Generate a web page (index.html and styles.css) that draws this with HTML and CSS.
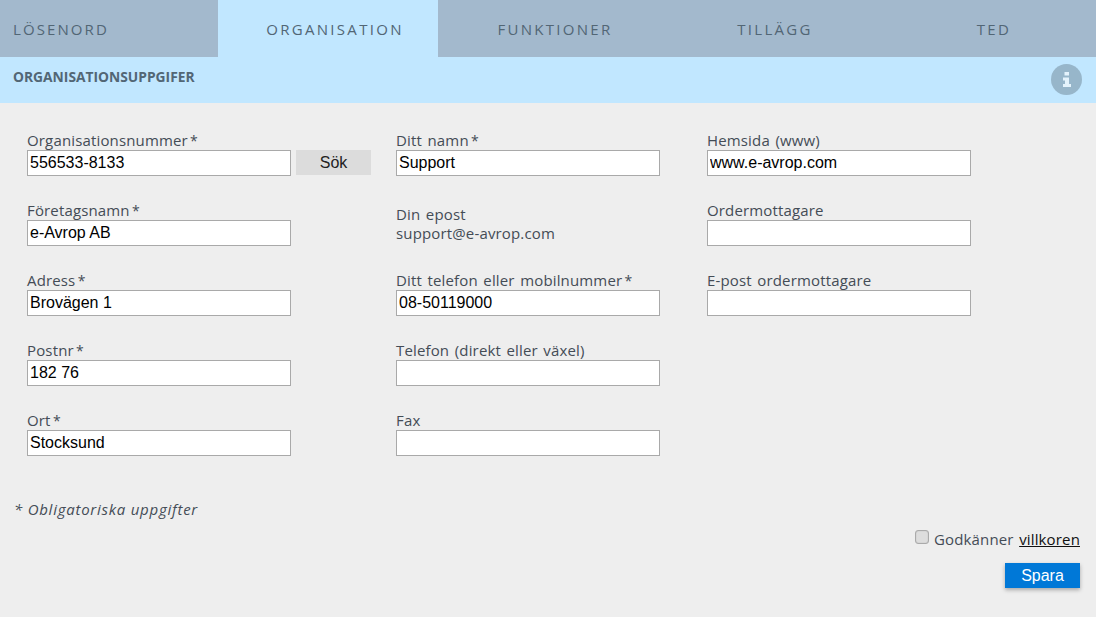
FILE: index.html
```html
<!DOCTYPE html>
<html lang="sv">
<head>
<meta charset="utf-8">
<title>Organisation</title>
<link rel="stylesheet" href="styles.css">
</head>
<body>
<div class="page">
  <nav class="tabs">
    <a class="tab tab-first">LÖSENORD</a>
    <a class="tab active">ORGANISATION</a>
    <a class="tab">FUNKTIONER</a>
    <a class="tab">TILLÄGG</a>
    <a class="tab">TED</a>
  </nav>
  <header class="section-head">
    <h2>ORGANISATIONSUPPGIFER</h2>
    <span class="info"><svg width="12" height="15" viewBox="0 0 12 15"><path fill="#e4f3fc" d="M3.500 0h4.500v3.500H3.500zM2 5.500h6v6.500h2v3H2v-3h2V8.500H2z"/></svg></span>
  </header>
  <main class="content">
    <div class="grid">
      <div class="col col-1">
        <div class="field"><label>Organisationsnummer<i class="req"> *</i></label>
          <div class="row"><input value="556533-8133"><button class="search">Sök</button></div></div>
        <div class="field"><label>Företagsnamn<i class="req"> *</i></label><input value="e-Avrop AB"></div>
        <div class="field"><label>Adress<i class="req"> *</i></label><input value="Brovägen 1"></div>
        <div class="field"><label>Postnr<i class="req"> *</i></label><input value="182 76"></div>
        <div class="field"><label>Ort<i class="req"> *</i></label><input value="Stocksund"></div>
      </div>
      <div class="col col-2">
        <div class="field"><label>Ditt namn<i class="req"> *</i></label><input value="Support"></div>
        <div class="field static"><label>Din epost</label><span>support@e-avrop.com</span></div>
        <div class="field"><label>Ditt telefon eller mobilnummer<i class="req"> *</i></label><input value="08-50119000"></div>
        <div class="field"><label>Telefon (direkt eller växel)</label><input></div>
        <div class="field"><label>Fax</label><input></div>
      </div>
      <div class="col col-3">
        <div class="field"><label>Hemsida (www)</label><input value="www.e-avrop.com"></div>
        <div class="field"><label>Ordermottagare</label><input></div>
        <div class="field"><label>E-post ordermottagare</label><input></div>
      </div>
    </div>
    <p class="note">* Obligatoriska uppgifter</p>
    <div class="terms"><input type="checkbox" class="check"><span>Godkänner <a class="link">villkoren</a></span></div>
    <div class="actions"><button class="save">Spara</button></div>
  </main>
</div>
</body>
</html>
```
FILE: styles.css
```css
* { box-sizing: border-box; }
html, body { margin: 0; padding: 0; background: #fff; }
body { font-family: "Open Sans", "Noto Sans", sans-serif; color: #444c56; }
.page { width: 1096px; }
.tabs { display: grid; grid-template-columns: 218px 220px 220px 220px 218px; height: 57px; background: #a3b9cd; }
.tab { display: flex; align-items: center; justify-content: center; padding-left: 14px; font-size: 15px; letter-spacing: 2.3px; color: #526675; }
.tab-first { justify-content: flex-start; padding-left: 13px; letter-spacing: 2.1px; }
.active { background: #c1e7ff; }
.section-head { height: 46px; background: #c1e7ff; display: flex; justify-content: space-between; padding: 0 14px 0 13px; }
.section-head h2 { margin: 11px 0 0; font-size: 13.8px; line-height: 18px; font-weight: 700; color: #526675; }
.info { width: 31px; height: 31px; border-radius: 50%; background: #97b6ca; margin-top: 7px; display: flex; align-items: center; justify-content: center; }
.content { background: #eee; height: 514px; padding: 29px 16px 0 14px; }
.grid { display: flex; padding-left: 13px; }
.col { display: flex; flex-direction: column; gap: 14px; }
.col-1 { width: 369px; }
.col-2 { width: 311px; }
.field { display: flex; flex-direction: column; height: 56px; }
.field label, .field span { font-size: 15px; height: 18px; line-height: 16px; letter-spacing: 0.15px; word-spacing: 1.5px; color: #444c56; }
.req { font-style: normal; font-size: 14px; word-spacing: -1.5px; }
.static label { margin-top: 4px; }
.static span { margin-top: 1px; }
input:not(.check) { width: 264px; height: 26px; border: 1px solid #a9a9a9; background: #fff; padding: 0 2px; font: 16px "Liberation Sans", sans-serif; color: #000; border-radius: 0; outline: 0; }
.row { display: flex; gap: 5px; }
.search { width: 75px; height: 25px; border: 0; background: #dcdcdc; font: 16px "Liberation Sans", sans-serif; color: #222; padding: 0; }
.note { margin: 32px 0 0; font-size: 15px; font-style: italic; line-height: 18px; color: #444c56; letter-spacing: 0.75px; }
.terms { display: flex; justify-content: flex-end; align-items: flex-start; margin-top: 12px; font-size: 15px; line-height: 18px; letter-spacing: 0.15px; word-spacing: 1.5px; }
.check { appearance: none; width: 14px; height: 14px; margin: 0 5px 0 0; background: #ddd; border: 1px solid #aaa; border-radius: 3px; box-shadow: inset 0 0 1px #999; }
.link { color: #111; text-decoration: underline; }
.actions { display: flex; justify-content: flex-end; margin-top: 15px; }
.save { width: 75px; height: 25px; border: 0; background: #0078d7; color: #fff; font: 16px "Liberation Sans", sans-serif; box-shadow: 0 2px 4px rgba(0,0,0,.3); padding: 0; }
```
